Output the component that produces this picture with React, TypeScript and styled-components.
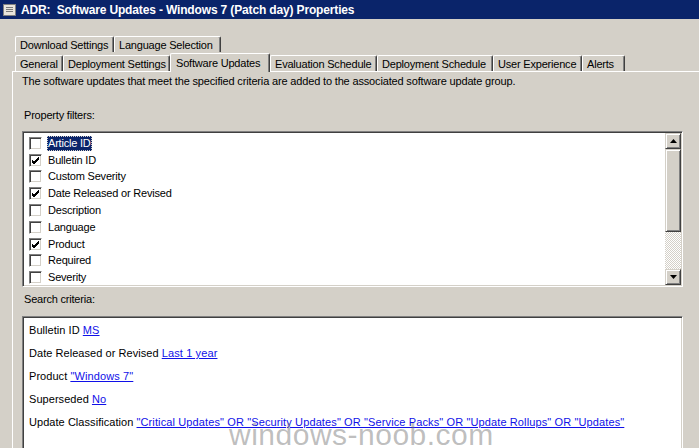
import React from "react";
import styled, { createGlobalStyle } from "styled-components";

const GlobalStyle = createGlobalStyle`
  html, body {
    margin: 0;
    padding: 0;
    background: #d4d0c8;
  }
  body {
    font-family: "Liberation Sans", Arial, sans-serif;
    font-size: 11px;
    color: #000;
  }
`;

const Window = styled.div`
  position: relative;
  width: 699px;
  height: 448px;
  overflow: hidden;
  background: #d4d0c8;
  display: flex;
  flex-direction: column;
`;

const TitleBar = styled.div`
  height: 19px;
  flex-shrink: 0;
  background: #0a246a;
  display: flex;
  align-items: center;
  gap: 5px;
  padding-left: 3px;
  color: #fff;
  font-weight: bold;
  font-size: 12px;
  letter-spacing: -0.15px;
  white-space: pre;
`;

const TitleIcon = styled.div`
  width: 13px;
  height: 12px;
  background: #e8e4dc;
  border: 1px solid #808080;
  box-sizing: border-box;
  display: flex;
  flex-direction: column;
  justify-content: center;
  gap: 1px;
  padding: 0 2px;
  & > span {
    height: 1px;
    background: #7a7a7a;
  }
`;

const TabArea = styled.div`
  margin-top: 17px;
  padding-left: 15px;
  display: flex;
  flex-direction: column;
`;

const TabRow = styled.div<{ $back?: boolean }>`
  display: flex;
  align-items: ${(p) => (p.$back ? "flex-start" : "flex-end")};
  height: ${(p) => (p.$back ? 18 : 17)}px;
`;

const Tab = styled.div<{ $w: number; $selected?: boolean }>`
  box-sizing: border-box;
  width: ${(p) => p.$w}px;
  height: ${(p) => (p.$selected ? 19 : 16)}px;
  margin-bottom: ${(p) => (p.$selected ? -1 : 0)}px;
  position: relative;
  z-index: ${(p) => (p.$selected ? 2 : 1)};
  padding-left: ${(p) => (p.$selected ? 5 : 4)}px;
  display: flex;
  align-items: center;
  background: #d4d0c8;
  border-top: 1px solid #fff;
  border-left: 1px solid #fff;
  border-right: 1px solid #404040;
  box-shadow: inset -1px 0 #808080;
  border-radius: 2px 2px 0 0;
  white-space: nowrap;
  letter-spacing: -0.2px;
`;

const Panel = styled.div`
  margin-left: 12px;
  border-top: 1px solid #fff;
  border-left: 1px solid #fff;
  padding: 3px 0 0 9px;
  flex: 1;
  display: flex;
  flex-direction: column;
`;

const Description = styled.div`
  line-height: 13px;
  letter-spacing: -0.16px;
`;

const Label = styled.div<{ $top: number }>`
  margin-top: ${(p) => p.$top}px;
  padding-left: 2px;
  line-height: 13px;
  letter-spacing: -0.2px;
`;

const Sunken = styled.div<{ $h: number; $top: number }>`
  box-sizing: border-box;
  width: 661px;
  height: ${(p) => p.$h}px;
  margin-top: ${(p) => p.$top}px;
  flex-shrink: 0;
  background: #fff;
  border-top: 1px solid #808080;
  border-left: 1px solid #808080;
  border-right: 1px solid #fff;
  border-bottom: 1px solid #fff;
  box-shadow: inset 1px 1px #404040, inset -1px -1px #d4d0c8;
  display: flex;
`;

const ItemList = styled.div`
  flex: 1;
  padding: 3px 0 0 6px;
  display: flex;
  flex-direction: column;
`;

const Item = styled.div`
  height: 17px;
  display: flex;
  align-items: center;
  gap: 5px;
  letter-spacing: -0.2px;
`;

const Box = styled.div`
  box-sizing: border-box;
  width: 13px;
  height: 13px;
  background: #fff;
  border-top: 1px solid #808080;
  border-left: 1px solid #808080;
  border-right: 1px solid #fff;
  border-bottom: 1px solid #fff;
  box-shadow: inset 1px 1px #404040, inset -1px -1px #d4d0c8;
  display: flex;
  align-items: center;
  justify-content: center;
`;

const ItemText = styled.span<{ $selected?: boolean }>`
  padding: 1px 1px;
  line-height: 13px;
  background: ${(p) => (p.$selected ? "#0a246a" : "transparent")};
  color: ${(p) => (p.$selected ? "#fff" : "#000")};
  outline: ${(p) => (p.$selected ? "1px dotted #d4d0c8" : "none")};
  outline-offset: -1px;
`;

const ScrollBar = styled.div`
  width: 16px;
  margin: 1px 1px 1px 0;
  display: flex;
  flex-direction: column;
`;

const ScrollButton = styled.div`
  box-sizing: border-box;
  height: 16px;
  background: #d4d0c8;
  border-top: 1px solid #d4d0c8;
  border-left: 1px solid #d4d0c8;
  border-right: 1px solid #404040;
  border-bottom: 1px solid #404040;
  box-shadow: inset 1px 1px #fff, inset -1px -1px #808080;
  display: flex;
  align-items: center;
  justify-content: center;
`;

const Thumb = styled(ScrollButton)`
  height: 83px;
`;

const Track = styled.div`
  flex: 1;
  background: repeating-conic-gradient(#d4d0c8 0 25%, #fff 0 50%) 0 0 / 2px 2px;
`;

const Criteria = styled.div`
  padding: 7px 0 0 6px;
  display: flex;
  flex-direction: column;
`;

const CriteriaLine = styled.div`
  height: 23px;
  line-height: 13px;
  letter-spacing: 0.05px;
  white-space: nowrap;
`;

const Link = styled.a`
  color: #1010e8;
  text-decoration: underline;
  cursor: pointer;
  letter-spacing: 0.12px;
`;

const Watermark = styled.div`
  position: absolute;
  left: 229px;
  top: 418px;
  font-family: "Liberation Sans", Arial, sans-serif;
  font-size: 30px;
  letter-spacing: 0.5px;
  color: rgba(110, 110, 110, 0.45);
  white-space: nowrap;
  pointer-events: none;
`;

const Check = () => (
  <svg width="9" height="9" viewBox="0 0 9 9">
    <path d="M1 4 L3 6 L8 1 M1 5 L3 7 L8 2 M1 6 L3 8 L8 3" stroke="#000" strokeWidth="1" fill="none" />
  </svg>
);

const Arrow = ({ down }: { down?: boolean }) => (
  <svg width="7" height="4" viewBox="0 0 7 4">
    <path d={down ? "M0 0 H7 L3.5 4 Z" : "M0 4 H7 L3.5 0 Z"} fill="#000" />
  </svg>
);

const filters = [
  { name: "Article ID", checked: false, selected: true },
  { name: "Bulletin ID", checked: true },
  { name: "Custom Severity", checked: false },
  { name: "Date Released or Revised", checked: true },
  { name: "Description", checked: false },
  { name: "Language", checked: false },
  { name: "Product", checked: true },
  { name: "Required", checked: false },
  { name: "Severity", checked: false },
];

const criteria = [
  { label: "Bulletin ID", value: "MS" },
  { label: "Date Released or Revised", value: "Last 1 year" },
  { label: "Product", value: "\"Windows 7\"" },
  { label: "Superseded", value: "No" },
  {
    label: "Update Classification",
    value:
      "\"Critical Updates\" OR \"Security Updates\" OR \"Service Packs\" OR \"Update Rollups\" OR \"Updates\"",
  },
];

export default function App() {
  return (
    <>
      <GlobalStyle />
      <Window>
        <TitleBar>
          <TitleIcon>
            <span />
            <span />
            <span />
          </TitleIcon>
          {"ADR:  Software Updates - Windows 7 (Patch day) Properties"}
        </TitleBar>
        <TabArea>
          <TabRow $back>
            <Tab $w={99}>Download Settings</Tab>
            <Tab $w={107}>Language Selection</Tab>
          </TabRow>
          <TabRow>
            <Tab $w={48}>General</Tab>
            <Tab $w={107}>Deployment Settings</Tab>
            <Tab $w={100} $selected>
              Software Updates
            </Tab>
            <Tab $w={107}>Evaluation Schedule</Tab>
            <Tab $w={116}>Deployment Schedule</Tab>
            <Tab $w={89}>User Experience</Tab>
            <Tab $w={43}>Alerts</Tab>
          </TabRow>
        </TabArea>
        <Panel>
          <Description>
            The software updates that meet the specified criteria are added to the associated software update group.
          </Description>
          <Label $top={21}>Property filters:</Label>
          <Sunken $h={156} $top={9}>
            <ItemList>
              {filters.map((f) => (
                <Item key={f.name}>
                  <Box>{f.checked && <Check />}</Box>
                  <ItemText $selected={f.selected}>{f.name}</ItemText>
                </Item>
              ))}
            </ItemList>
            <ScrollBar>
              <ScrollButton>
                <Arrow />
              </ScrollButton>
              <Thumb />
              <Track />
              <ScrollButton>
                <Arrow down />
              </ScrollButton>
            </ScrollBar>
          </Sunken>
          <Label $top={6}>Search criteria:</Label>
          <Sunken $h={140} $top={10}>
            <Criteria>
              {criteria.map((c) => (
                <CriteriaLine key={c.label}>
                  {c.label} <Link>{c.value}</Link>
                </CriteriaLine>
              ))}
            </Criteria>
          </Sunken>
        </Panel>
        <Watermark>windows-noob.com</Watermark>
      </Window>
    </>
  );
}
